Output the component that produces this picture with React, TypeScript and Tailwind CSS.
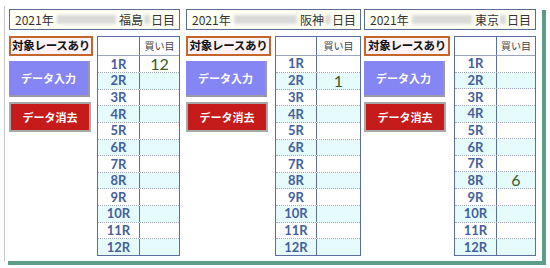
import React from 'react';

interface PanelProps {
  place: string;
  width: string;
  labelWidth: string;
  colWidth: string;
  picks: Record<number, string>;
}

const rows = Array.from({ length: 12 }, (_, i) => i + 1);

const Blur: React.FC<{ className?: string }> = ({ className = '' }) => (
  <span className={`inline-block h-[9px] bg-[#d9d9d9] blur-[1.5px] ${className}`} />
);

const Panel: React.FC<PanelProps> = ({ place, width, labelWidth, colWidth, picks }) => (
  <div className={`flex flex-col ${width}`}>
    {/* Title */}
    <div className="h-[21px] flex items-center border-[1.5px] border-[#5b6d94] bg-[#fffff3] pl-[5px] pr-[4px] text-[12px] text-[#333] leading-none">
      <span>2021年</span>
      <Blur className="flex-1 mx-[3px]" />
      <span>{place}</span>
      <Blur className="w-[6px] mx-[1px]" />
      <span>日目</span>
    </div>

    <div className="mt-[6px] flex gap-[4px]">
      {/* Left side */}
      <div className={`flex flex-col ${labelWidth}`}>
        <div className="h-[20px] flex items-center justify-center border-2 border-[#c5652e] bg-[#fdf2f5] text-[11.5px] font-bold text-[#111] tracking-[-0.3px] leading-none">
          対象レースあり
        </div>
        <button className="mt-[5px] w-[81px] h-[36px] bg-[#8585f4] border-r-2 border-b-2 border-[#9a9aa6] text-white text-[11px] font-bold leading-none">
          データ入力
        </button>
        <button className="mt-[5px] w-[82px] h-[30px] bg-[#c61b1b] border-2 border-[#a8a8a8] text-white text-[11px] font-bold leading-none">
          データ消去
        </button>
      </div>

      {/* Table */}
      <div className="flex-1 h-[220px] flex flex-col border-[1.5px] border-[#5a6ea2] bg-white">
        <div className="h-[19px] flex border-b border-[#9aa6c0]">
          <div className={`${colWidth} border-r border-[#5a6ea2]`} />
          <div className="flex-1 flex items-center justify-center text-[10px] text-[#444] leading-none">買い目</div>
        </div>
        {rows.map((r) => (
          <div
            key={r}
            className={`flex-1 flex ${r % 2 === 0 ? 'bg-[#e6fcfc]' : 'bg-white'} ${r < 12 ? 'border-b border-dotted border-[#a0a8b8]' : ''}`}
            style={{ fontFamily: 'Lato, "DejaVu Sans", sans-serif' }}
          >
            <div className={`${colWidth} flex items-center justify-center border-r border-[#5a6ea2] text-[13px] font-bold text-[#44609c] leading-none`}>
              {r}R
            </div>
            <div className="flex-1 flex items-center justify-center text-[16px] text-[#355a22] leading-none">
              {picks[r] ?? ''}
            </div>
          </div>
        ))}
      </div>
    </div>
  </div>
);

export default function App() {
  return (
    <div className="w-[550px] h-[268px] bg-white overflow-hidden" style={{ fontFamily: '"Noto Sans CJK JP", "Noto Sans", sans-serif' }}>
      <div className="ml-[4px] mt-[6px] w-[538px] h-[255px] border-l border-[#c8c8c8] shadow-[4px_4px_0_#5b9d87] pl-[4px] pt-[3px] flex">
        <Panel place="福島" width="w-[171px]" labelWidth="w-[84px]" colWidth="w-[42px]" picks={{ 1: '12' }} />
        <div className="w-[6px]" />
        <Panel place="阪神" width="w-[175px]" labelWidth="w-[85px]" colWidth="w-[41px]" picks={{ 2: '1' }} />
        <div className="w-[3px]" />
        <Panel place="東京" width="w-[172px]" labelWidth="w-[86px]" colWidth="w-[42px]" picks={{ 8: '6' }} />
      </div>
    </div>
  );
}
